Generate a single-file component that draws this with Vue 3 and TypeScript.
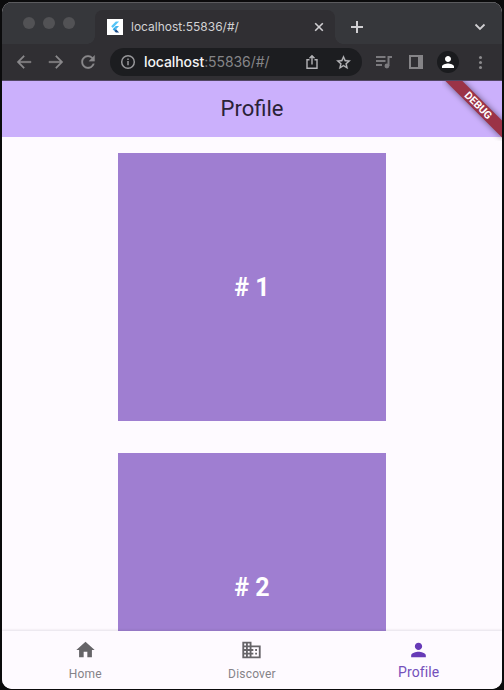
<script setup lang="ts">
import { ref } from 'vue'

interface NavItem {
  label: string
  path: string
}

const address = { host: 'localhost', rest: ':55836/#/' }
const cards: number[] = [1, 2]
const active = ref('Profile')
const navItems: NavItem[] = [
  { label: 'Home', path: 'M10 20v-6h4v6h5v-8h3L12 3 2 12h3v8z' },
  {
    label: 'Discover',
    path: 'M12 7V3H2v18h20V7H12zM6 19H4v-2h2v2zm0-4H4v-2h2v2zm0-4H4V9h2v2zm0-4H4V5h2v2zm4 12H8v-2h2v2zm0-4H8v-2h2v2zm0-4H8V9h2v2zm0-4H8V5h2v2zm10 12h-8v-2h2v-2h-2v-2h2v-2h-2V9h8v10zm-2-8h-2v2h2v-2zm0 4h-2v2h2v-2z',
  },
  {
    label: 'Profile',
    path: 'M12 12c2.21 0 4-1.79 4-4s-1.79-4-4-4-4 1.79-4 4 1.79 4 4 4zm0 2c-2.67 0-8 1.34-8 4v2h16v-2c0-2.66-5.33-4-8-4z',
  },
]
</script>

<template>
  <div class="desktop">
    <div class="window">
      <header class="strip">
        <div class="lights"><i></i><i></i><i></i></div>
        <div class="tab">
          <span class="favicon">
            <svg width="16" height="16" viewBox="0 0 16 16">
              <path d="M8.800 2.500h3.300L5.800 8.900 4.200 7.300z" fill="#54c5f8" />
              <path d="M8.800 7h3.300L9 10.200 7.300 8.500z" fill="#45b5ee" />
              <path d="M5.700 10.200l1.700-1.700 1.700 1.700-1.700 1.700z" fill="#29a3e5" />
              <path d="M7.400 11.900l1.700-1.700 3 3.200H8.900z" fill="#1b4a86" />
            </svg>
          </span>
          <span class="tab-title">{{ address.host }}{{ address.rest }}</span>
          <svg class="close" width="10" height="10" viewBox="0 0 10 10"><path d="M1.200 1.200l7.600 7.600M8.800 1.200L1.200 8.800" /></svg>
        </div>
        <svg class="plus" width="14" height="14" viewBox="0 0 14 14"><path d="M7 1v12M1 7h12" /></svg>
        <svg class="chevron" width="12" height="8" viewBox="0 0 12 8"><path d="M1.500 1.500L6 6l4.500-4.500" /></svg>
      </header>

      <div class="toolbar">
        <div class="history">
          <svg width="20" height="20" viewBox="0 0 24 24"><path d="M20.500 11H7.200l5.600-5.600L11.500 4l-8 8 8 8 1.300-1.400L7.200 13h13.300z" /></svg>
          <svg width="20" height="20" viewBox="0 0 24 24"><path d="M3.500 11h13.300l-5.600-5.600L12.500 4l8 8-8 8-1.300-1.400 5.600-5.600H3.500z" /></svg>
          <svg width="20" height="20" viewBox="0 0 24 24"><path d="M17.650 6.350C16.200 4.900 14.210 4 12 4c-4.420 0-7.990 3.580-7.990 8s3.570 8 7.990 8c3.730 0 6.840-2.550 7.730-6h-2.080c-.82 2.330-3.040 4-5.650 4-3.310 0-6-2.690-6-6s2.690-6 6-6c1.660 0 3.140.69 4.220 1.780L13 11h7V4l-2.350 2.350z" /></svg>
        </div>
        <div class="omnibox">
          <svg class="info" width="16" height="16" viewBox="0 0 16 16">
            <circle cx="8" cy="8" r="6.300" />
            <path d="M8 7v4.300M8 4.400v1.600" />
          </svg>
          <span class="url"><b>{{ address.host }}</b>{{ address.rest }}</span>
          <svg class="share" width="14" height="16" viewBox="0 0 14 16">
            <path d="M4.500 5.700H2v8.500h10V5.700H9.500M7 10.500V2M4.500 4.200L7 1.800l2.500 2.400" />
          </svg>
          <svg class="star" width="17" height="17" viewBox="0 0 24 24"><path d="M22 9.240l-7.190-.62L12 2 9.190 8.630 2 9.240l5.460 4.730L5.820 21 12 17.270 18.180 21l-1.630-7.030L22 9.240zM12 15.400l-3.760 2.270 1-4.280-3.320-2.880 4.380-.38L12 6.100l1.710 4.040 4.380.38-3.320 2.880 1 4.280L12 15.400z" /></svg>
        </div>
        <div class="actions">
          <svg class="music" width="16" height="14" viewBox="0 0 16 14">
            <path d="M0 2h9.500M0 6h9.500M0 10h6" />
            <path d="M12.500 11V2H16" />
            <circle cx="10.900" cy="11" r="2.400" />
          </svg>
          <svg class="panel" width="14" height="14" viewBox="0 0 14 14"><path d="M0 0h14v14H0zM2 2v10h7V2z" fill-rule="evenodd" /></svg>
          <span class="avatar">
            <svg width="18" height="18" viewBox="0 0 24 24"><path :d="navItems[2].path" /></svg>
          </span>
          <span class="dots"><i></i><i></i><i></i></span>
        </div>
      </div>

      <section class="app">
        <div class="appbar">
          <h1>{{ active }}</h1>
          <svg class="banner" width="60" height="60" viewBox="0 0 60 60">
            <defs>
              <filter id="soft" x="-30%" y="-100%" width="160%" height="300%"><feGaussianBlur stdDeviation="3" /></filter>
            </defs>
            <g transform="translate(60 0) rotate(45)">
              <rect x="-40" y="28" width="80" height="12" fill="#000" fill-opacity=".5" filter="url(#soft)" />
              <rect x="-40" y="28" width="80" height="12" fill="#9b3347" />
              <text x="0.500" y="37.600" text-anchor="middle">DEBUG</text>
            </g>
          </svg>
        </div>
        <main class="feed">
          <article v-for="n in cards" :key="n" class="card"># {{ n }}</article>
        </main>
        <nav class="bottom">
          <button
            v-for="item in navItems"
            :key="item.label"
            type="button"
            class="item"
            :class="{ selected: item.label === active }"
            @click="active = item.label"
          >
            <svg width="23" height="22" viewBox="0 0 24 24"><path :d="item.path" /></svg>
            <span>{{ item.label }}</span>
          </button>
        </nav>
      </section>
    </div>
  </div>
</template>

<style>
body {
  margin: 0;
  background: #121212;
}
</style>

<style scoped>
* {
  box-sizing: border-box;
}
svg {
  display: block;
  flex: none;
}
.desktop {
  width: 504px;
  height: 690px;
  padding: 2px 2px 1px;
  background: #0b0b0c;
  overflow: hidden;
}
.window {
  height: 687px;
  border-radius: 10px;
  overflow: hidden;
  display: flex;
  flex-direction: column;
  background: #fefaff;
  font-family: Roboto, sans-serif;
}
.strip {
  flex: none;
  height: 42px;
  display: flex;
  background: #36373b;
  border-top: 1px solid #5b5b5e;
}
.lights {
  width: 93px;
  padding: 14px 0 0 21px;
  display: flex;
  gap: 8px;
}
.lights i {
  width: 12px;
  height: 12px;
  border-radius: 50%;
  background: #525255;
}
.tab {
  position: relative;
  width: 240px;
  height: 34px;
  margin-top: 7px;
  padding: 0 11px 0 12px;
  display: flex;
  align-items: center;
  border-radius: 8px 8px 0 0;
  background: #302f33;
}
.tab::before,
.tab::after {
  content: '';
  position: absolute;
  bottom: 0;
  width: 8px;
  height: 8px;
}
.tab::before {
  left: -8px;
  background: radial-gradient(circle at 0 0, #36373b 7.5px, #302f33 8px);
}
.tab::after {
  right: -8px;
  background: radial-gradient(circle at 100% 0, #36373b 7.5px, #302f33 8px);
}
.favicon {
  background: #fff;
}
.tab-title {
  margin-left: 8px;
  flex: 1;
  font: 12px/16px Inter, sans-serif;
  color: #d2d2d4;
}
.close,
.plus,
.chevron {
  fill: none;
  stroke: #d0cfd2;
  stroke-width: 1.6;
}
.plus {
  margin: 17px 0 0 15px;
  stroke-width: 2;
}
.chevron {
  margin: 20px 16px 0 auto;
  stroke-width: 1.8;
}
.toolbar {
  flex: none;
  height: 37px;
  display: flex;
  align-items: center;
  background: #302f33;
  border-bottom: 1px solid #524663;
}
.history {
  width: 108px;
  padding-left: 12px;
  display: flex;
  gap: 12px;
  fill: #89888b;
  stroke: #89888b;
  stroke-width: 0.3;
}
.omnibox {
  width: 252px;
  height: 28px;
  padding: 0 10px;
  display: flex;
  align-items: center;
  border-radius: 14px;
  background: #1c1d20;
}
.info {
  fill: none;
  stroke: #97979a;
  stroke-width: 1.5;
}
.url {
  flex: 1;
  margin-left: 8px;
  font: 14px/20px Inter, sans-serif;
  letter-spacing: -0.08px;
  color: #858588;
}
.url b {
  font-weight: 500;
  color: #f4f4f5;
}
.share {
  fill: none;
  stroke: #b4b4b7;
  stroke-width: 1.4;
}
.star {
  margin-left: 16px;
  fill: #b8b8bb;
  stroke: #b8b8bb;
  stroke-width: 0.4;
}
.actions {
  display: flex;
  align-items: center;
  margin-left: 14px;
}
.music {
  fill: #7b7a7e;
  stroke: #7b7a7e;
  stroke-width: 2;
}
.music path {
  fill: none;
}
.music circle {
  stroke: none;
}
.panel {
  margin-left: 17px;
  fill: #858487;
}
.avatar {
  width: 22px;
  height: 22px;
  margin-left: 14px;
  display: grid;
  place-items: center;
  border-radius: 50%;
  background: #1a1b1e;
  fill: #fff;
}
.dots {
  margin-left: 20px;
  display: grid;
  gap: 2px;
}
.dots i {
  width: 3px;
  height: 3px;
  border-radius: 50%;
  background: #8b8a8d;
}
.app {
  flex: 1;
  min-height: 0;
  display: flex;
  flex-direction: column;
}
.appbar {
  position: relative;
  flex: none;
  height: 56px;
  display: grid;
  place-items: center;
  background: #cbb0fc;
}
.appbar h1 {
  margin: 0;
  font-size: 22px;
  line-height: 28px;
  font-weight: 400;
  color: #2a2237;
}
.banner {
  position: absolute;
  top: 0;
  right: 0;
}
.banner text {
  font-size: 10.6px;
  font-weight: 700;
  fill: #fff;
}
.feed {
  flex: 1;
  min-height: 0;
  padding-top: 16px;
  display: flex;
  flex-direction: column;
  align-items: center;
  gap: 32px;
  overflow: hidden;
}
.card {
  flex: none;
  width: 268px;
  height: 268px;
  display: grid;
  place-items: center;
  background: #9f7ed1;
  color: #fff;
  font-size: 25px;
  font-weight: 700;
}
.bottom {
  flex: none;
  height: 58px;
  display: grid;
  grid-template-columns: repeat(3, 1fr);
  background: #fefaff;
  box-shadow: 0 -1px 2px rgba(60, 50, 70, 0.12);
  position: relative;
}
.item {
  padding: 8px 0 0;
  display: flex;
  flex-direction: column;
  align-items: center;
  gap: 5px;
  border: 0;
  background: none;
  font: 12px/16px Roboto, sans-serif;
  letter-spacing: 0.2px;
  color: #858288;
  fill: #666468;
}
.item.selected {
  gap: 3px;
  font-size: 14px;
  letter-spacing: 0.1px;
  color: #7450bb;
  fill: #673ab7;
}
</style>
